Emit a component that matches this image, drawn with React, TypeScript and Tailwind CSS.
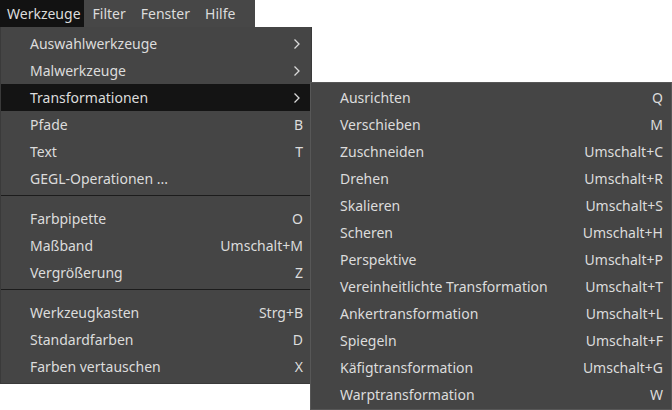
const MENUBAR = ["Werkzeuge", "Filter", "Fenster", "Hilfe"];

type Item = { label: string; key?: string; sub?: boolean; active?: boolean } | "sep";

const TOOLS: Item[] = [
  { label: "Auswahlwerkzeuge", sub: true },
  { label: "Malwerkzeuge", sub: true },
  { label: "Transformationen", sub: true, active: true },
  { label: "Pfade", key: "B" },
  { label: "Text", key: "T" },
  { label: "GEGL-Operationen ..." },
  "sep",
  { label: "Farbpipette", key: "O" },
  { label: "Maßband", key: "Umschalt+M" },
  { label: "Vergrößerung", key: "Z" },
  "sep",
  { label: "Werkzeugkasten", key: "Strg+B" },
  { label: "Standardfarben", key: "D" },
  { label: "Farben vertauschen", key: "X" },
];

const TRANSFORM: Item[] = [
  { label: "Ausrichten", key: "Q" },
  { label: "Verschieben", key: "M" },
  { label: "Zuschneiden", key: "Umschalt+C" },
  { label: "Drehen", key: "Umschalt+R" },
  { label: "Skalieren", key: "Umschalt+S" },
  { label: "Scheren", key: "Umschalt+H" },
  { label: "Perspektive", key: "Umschalt+P" },
  { label: "Vereinheitlichte Transformation", key: "Umschalt+T" },
  { label: "Ankertransformation", key: "Umschalt+L" },
  { label: "Spiegeln", key: "Umschalt+F" },
  { label: "Käfigtransformation", key: "Umschalt+G" },
  { label: "Warptransformation", key: "W" },
];

function Chevron() {
  return (
    <svg width="8" height="12" viewBox="0 0 8 12" className="mr-[2px]">
      <path d="M1.5 1.5 L6 6 L1.5 10.5" fill="none" stroke="#dadada" strokeWidth="1.3" />
    </svg>
  );
}

function MenuList({ items, className }: { items: Item[]; className: string }) {
  return (
    <div className={`flex flex-col ${className}`}>
      {items.map((it, i) =>
        it === "sep" ? (
          <div key={i} className="pt-[3px] pb-[9px]">
            <div className="h-px bg-[#1c1c1c]" />
          </div>
        ) : (
          <div
            key={i}
            className={`flex h-[27px] items-center justify-between pl-[29px] pr-[8px] ${
              it.active ? "bg-[#141414]" : ""
            }`}
          >
            <span>{it.label}</span>
            {it.sub ? <Chevron /> : <span>{it.key}</span>}
          </div>
        )
      )}
    </div>
  );
}

export default function App() {
  return (
    <div
      className="relative h-[410px] w-[672px] overflow-hidden bg-white text-[14px] text-[#dcdcdc]"
      style={{ fontFamily: '"Noto Sans", "DejaVu Sans", sans-serif' }}
    >
      {/* menubar */}
      <div className="flex h-[27px] w-[255px] items-center bg-[#474747]">
        {MENUBAR.map((m, i) => (
          <div
            key={m}
            className={`flex h-full items-center ${
              i === 0 ? "bg-[#121212] pl-[7px] pr-[3px]" : "pl-[9px] pr-[6px]"
            }`}
          >
            {m}
          </div>
        ))}
      </div>

      <div className="flex items-start">
        {/* Werkzeuge menu */}
        <div className="w-[312px] border border-t-0 border-[#3a3a3a] bg-[#454545]">
          <MenuList items={TOOLS} className="py-[3px]" />
        </div>

        {/* Transformationen submenu */}
        <div className="relative -ml-[2px] mt-[55px] w-[362px] border border-[#575757] bg-[#454545]">
          <MenuList items={TRANSFORM} className="py-[1px]" />
        </div>
      </div>
    </div>
  );
}
